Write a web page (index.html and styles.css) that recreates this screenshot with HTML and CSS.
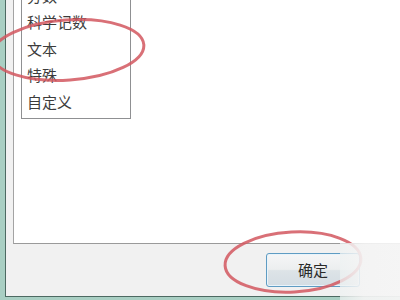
FILE: index.html
```html
<!DOCTYPE html>
<html lang="zh-CN">
<head>
<meta charset="utf-8">
<title>设置单元格格式</title>
<link rel="stylesheet" href="styles.css">
</head>
<body>
<div class="frame">
  <div class="panel">
    <ul class="listbox">
      <li>分数</li>
      <li>科学记数</li>
      <li>文本</li>
      <li>特殊</li>
      <li>自定义</li>
    </ul>
  </div>
  <div class="footer">
    <button class="btn" type="button">确定</button>
  </div>
</div>
<svg class="marks" width="400" height="300" viewBox="0 0 400 300" aria-hidden="true">
  <ellipse cx="68" cy="50" rx="76" ry="30" transform="rotate(-4 68 50)"/>
  <ellipse cx="293" cy="262" rx="68" ry="30" transform="rotate(-3 293 262)"/>
</svg>
<div class="watermark"></div>
</body>
</html>
```
FILE: styles.css
```css
html, body {
  margin: 0;
  padding: 0;
}
body {
  width: 400px;
  height: 300px;
  overflow: hidden;
  background: #a9cfc3;
  font-family: "Noto Sans CJK SC", "Noto Sans", sans-serif;
  position: relative;
}
.frame {
  box-sizing: border-box;
  margin-left: 5px;
  height: 297px;
  border-left: 1px solid #4d6a62;
  border-bottom: 1px solid #4d6a62;
  background: #f1f1f1;
  padding-left: 7px;
  display: flex;
  flex-direction: column;
}
.panel {
  box-sizing: border-box;
  height: 244px;
  background: #fff;
  border-left: 1px solid #a3a3a3;
  border-bottom: 1px solid #9a9a9a;
  padding-left: 7px;
  overflow: hidden;
}
.listbox {
  list-style: none;
  margin: -17px 0 0 0;
  padding: 0 0 3px 5px;
  width: 110px;
  box-sizing: border-box;
  border: 1px solid #8f9092;
  border-top: none;
}
.listbox li {
  height: 26.4px;
  line-height: 26.4px;
  font-size: 15px;
  color: #3c3c3c;
  white-space: nowrap;
}
.footer {
  flex: 1;
  display: flex;
  justify-content: flex-end;
  align-items: flex-start;
  padding: 9px 40px 0 0;
}
.btn {
  box-sizing: border-box;
  width: 94px;
  height: 34px;
  border: 1px solid #5f9cc3;
  border-radius: 3px;
  box-shadow: inset 0 0 0 1px #e9f4fb;
  background: linear-gradient(#f5f6f7 0%, #eceeef 48%, #dde3e7 52%, #d4dde3 100%);
  font-family: "Noto Sans CJK SC", "Noto Sans", sans-serif;
  font-size: 15px;
  color: #2a2a2a;
  padding: 0;
  line-height: 30px;
}
.marks {
  position: absolute;
  left: 0;
  top: 0;
  pointer-events: none;
}
.marks ellipse {
  fill: none;
  stroke: #d2575f;
  stroke-width: 3;
  stroke-opacity: 0.85;
}
.watermark {
  position: absolute;
  left: 340px;
  top: 243px;
  width: 60px;
  height: 57px;
  background: linear-gradient(90deg, rgba(238, 242, 242, 0.75), rgba(244, 244, 244, 0.92) 40%, rgba(245, 245, 245, 0.95));
}
```
